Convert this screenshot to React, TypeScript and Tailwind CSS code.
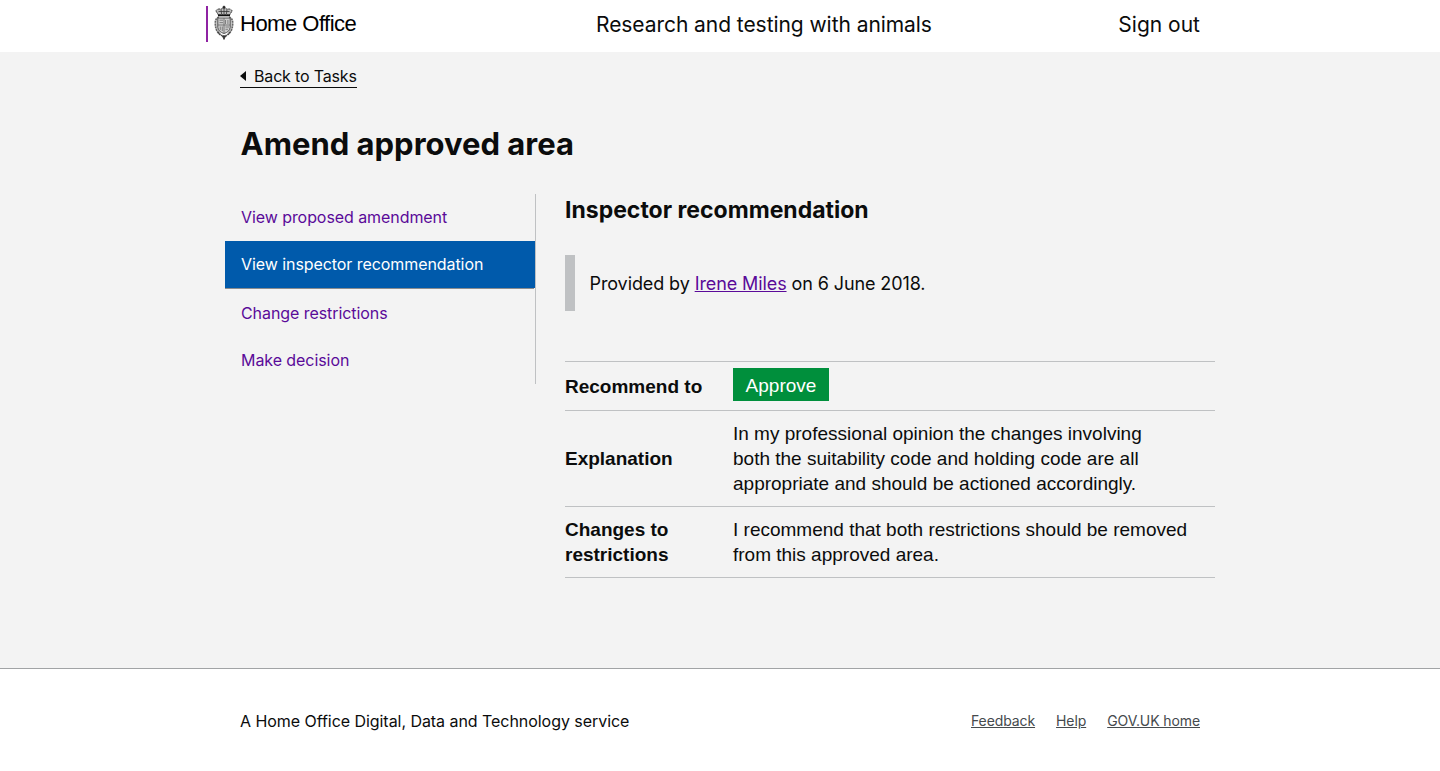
import React from "react";

function Crest() {
  return (
    <svg width="20" height="36" viewBox="0 0 20 36" fill="none" stroke="#333" aria-hidden="true">
      <circle cx="10" cy="2.2" r="1.2" fill="#222" strokeWidth="0.5" />
      <path d="M4.5 10 L1.8 5.8 Q3.5 3.4 7 4.2 Q10 2.2 13 4.2 Q16.5 3.4 18.2 5.8 L15.5 10 Z" fill="#bbb" strokeWidth="1" strokeDasharray="2 0.6" />
      <path d="M7 4.5 L7.6 9 M13 4.5 L12.4 9 M10 3.5 V9 M4.5 6.5 H15.5" strokeWidth="0.8" />
      <path d="M4 10.4 H16" stroke="#111" strokeWidth="1.8" />
      <path d="M5 12 Q1 13 1.3 19 Q1.5 26 6 29.5 M15 12 Q19 13 18.7 19 Q18.5 26 14 29.5" fill="#ccc" stroke="#666" strokeWidth="1.6" strokeDasharray="2 0.7" />
      <path d="M3.8 13 H16.2 V22.5 Q15.5 27 10 28.5 Q4.5 27 3.8 22.5 Z" fill="#ccc" stroke="#555" strokeWidth="1" />
      <path d="M10 13 V28 M4 20 H16" stroke="#666" strokeWidth="0.8" />
      <path d="M5.5 15.2 H9 M5.5 17.6 H9 M11.5 15 V19 M13.9 15 V19 M6.3 21.5 V25 M8.3 21.5 V26 M11.5 22 H15 M11.5 24.3 H14" stroke="#777" strokeWidth="0.9" />
      <path d="M4 27 Q6.5 31 10 31 Q13.5 31 16 27" stroke="#444" strokeWidth="1.6" strokeDasharray="1.6 0.6" />
      <path d="M8.4 31 L10 34.5 L11.6 31 Z" fill="#333" strokeWidth="0.8" />
    </svg>
  );
}

function NavLink({ label }: { label: string }) {
  return (
    <a href="#" className="flex h-[47px] items-center pb-0.5 pl-4 text-base tracking-[-0.07px] text-[#5a0a99]">
      {label}
    </a>
  );
}

export default function App() {
  return (
    <div className="flex h-[771px] flex-col bg-white font-['Inter',sans-serif] text-[#0b0c0c]">
      <header className="h-[52px] shrink-0">
        <div className="mx-auto flex h-full w-[960px] items-center">
          <a href="#" className="-ml-[34px] -mt-1 flex h-9 w-[150px] items-center border-l-2 border-[#8f23a3]">
            <span className="-mt-0.5 ml-1.5">
              <Crest />
            </span>
            <span className="-mt-0.5 ml-[6px] whitespace-nowrap font-['Liberation_Sans',sans-serif] text-[22px] tracking-[-0.5px] text-black">
              Home Office
            </span>
          </a>
          <a href="#" className="-mt-0.5 ml-[240px] text-[21px] leading-7 tracking-[-0.06px]">
            Research and testing with animals
          </a>
          <a href="#" className="-mt-0.5 ml-auto text-[21px] leading-7">
            Sign out
          </a>
        </div>
      </header>
      <main className="h-[616px] shrink-0 bg-[#f3f3f3]">
        <div className="mx-auto w-[960px] pt-[13px]">
          <a
            href="#"
            className="flex h-[23px] w-[117px] items-center gap-2 whitespace-nowrap border-b border-[#0b0c0c] text-base leading-5 tracking-[-0.16px]"
          >
            <svg width="6" height="10" viewBox="0 0 6 10" className="shrink-0" aria-hidden="true">
              <path d="M6 0 V10 L0 5 Z" fill="#0b0c0c" />
            </svg>
            Back to Tasks
          </a>
          <h1 className="mt-[36px] pl-[0.5px] text-[31px] font-bold leading-[40px]">Amend approved area</h1>
          <div className="-mx-[15px] mt-[30px] flex items-start">
            <nav className="w-[311px] shrink-0 border-r border-[#bfc1c3]">
              <NavLink label="View proposed amendment" />
              <a
                href="#"
                className="flex h-[47px] items-center bg-[#005aab] pb-0.5 pl-4 text-base tracking-[-0.07px] text-white"
              >
                View inspector recommendation
              </a>
              <div className="mb-px mr-px h-px bg-[#8a8c8e]" />
              <NavLink label="Change restrictions" />
              <NavLink label="Make decision" />
            </nav>
            <section className="ml-[29px] w-[650px]">
              <h2 className="text-[23px] font-bold leading-8">Inspector recommendation</h2>
              <div className="mt-[29px] flex h-14 items-center border-l-[10px] border-[#bfc1c3] pl-[14.5px] text-[18px] tracking-[-0.1px]">
                <p>
                  Provided by{" "}
                  <a href="#" className="text-[#5a0a99] underline decoration-1">
                    Irene Miles
                  </a>{" "}
                  on 6 June 2018.
                </p>
              </div>
              <dl className="mt-[50px] border-t border-[#bfc1c3] font-['Liberation_Sans',sans-serif] text-[19px] leading-[25px]">
                <div className="flex h-[49px] border-b border-[#bfc1c3]">
                  <dt className="w-[168px] pt-[12px] font-bold">Recommend to</dt>
                  <dd className="mt-[6px] flex h-[33px] w-24 items-center justify-center bg-[#008f3c] pt-0.5 text-white">
                    Approve
                  </dd>
                </div>
                <div className="flex h-24 items-center border-b border-[#bfc1c3]">
                  <dt className="w-[168px] font-bold">Explanation</dt>
                  <dd className="whitespace-nowrap">
                    In my professional opinion the changes involving
                    <br />
                    both the suitability code and holding code are all
                    <br />
                    appropriate and should be actioned accordingly.
                  </dd>
                </div>
                <div className="flex h-[71px] items-center border-b border-[#bfc1c3]">
                  <dt className="w-[168px] font-bold">
                    Changes to
                    <br />
                    restrictions
                  </dt>
                  <dd className="whitespace-nowrap">
                    I recommend that both restrictions should be removed
                    <br />
                    from this approved area.
                  </dd>
                </div>
              </dl>
            </section>
          </div>
        </div>
      </main>
      <footer className="grow border-t border-[#a1a3a5]">
        <div className="mx-auto flex w-[960px] items-center justify-between pt-10">
          <p className="text-base leading-6 tracking-[-0.05px]">A Home Office Digital, Data and Technology service</p>
          <div className="flex gap-[21px] text-sm tracking-[-0.1px] text-[#454a4d]">
            <a href="#" className="underline">Feedback</a>
            <a href="#" className="underline">Help</a>
            <a href="#" className="underline">GOV.UK home</a>
          </div>
        </div>
      </footer>
    </div>
  );
}
